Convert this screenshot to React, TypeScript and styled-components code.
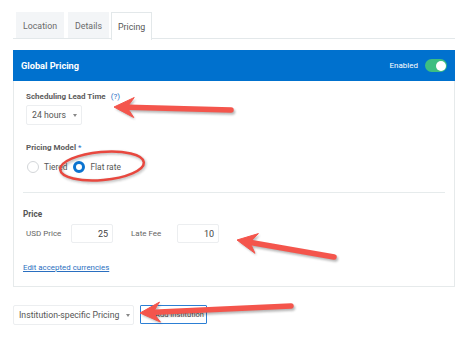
import React from "react";
import styled, { createGlobalStyle } from "styled-components";

const Global = createGlobalStyle`
  html, body { margin: 0; padding: 0; background: #fff; }
  body { font-family: Roboto, "Liberation Sans", Arial, sans-serif; color: #555; }
  * { box-sizing: border-box; }
`;

const Page = styled.div`
  position: relative;
  width: 468px;
  height: 345px;
  padding: 12px 13px 0 13px;
  overflow: hidden;
`;

const TabBar = styled.div`
  display: flex;
  gap: 4px;
  padding-left: 3px;
  border-bottom: 1px solid #e3e8ea;
  width: 442px;
  height: 27px;
`;

const Tab = styled.div<{ $active?: boolean }>`
  padding: 0 6px;
  display: flex;
  align-items: center;
  font-size: 8.8px;
  white-space: nowrap;
  color: ${(p) => (p.$active ? "#555" : "#6a6a6a")};
  background: ${(p) => (p.$active ? "#fff" : "#f3f5f7")};
  border: 1px solid ${(p) => (p.$active ? "#e3e8ea" : "transparent")};
  border-bottom: none;
  margin-bottom: ${(p) => (p.$active ? "-1px" : "0")};
  margin-left: ${(p) => (p.$active ? "-2px" : "0")};
  height: ${(p) => (p.$active ? "28px" : "26px")};
`;

const Card = styled.div`
  margin-top: 11px;
  width: 442px;
  border: 1px solid #e6eaeb;
  border-top: none;
`;

const Header = styled.div`
  height: 31px;
  background: #0071ce;
  display: flex;
  align-items: center;
  justify-content: space-between;
  padding: 0 8px 0 8px;
  margin: 0 -1px;
`;

const HeaderTitle = styled.div`
  color: #fff;
  font-size: 9.2px;
  font-weight: 700;
`;

const HeaderRight = styled.div`
  display: flex;
  align-items: center;
  gap: 7px;
  color: #fff;
  font-size: 8px;
`;

const Toggle = styled.div`
  width: 22px;
  height: 13px;
  border-radius: 7px;
  background: #3dbe80;
  display: flex;
  justify-content: flex-end;
  align-items: center;
  padding: 1.5px;
`;

const Knob = styled.div`
  width: 10px;
  height: 10px;
  border-radius: 50%;
  background: #fff;
`;

const Body = styled.div`
  padding: 9px 9px 13px 9px;
`;

const Section = styled.div`
  padding: 0 3px;
`;

const Label = styled.div<{ $mt?: number }>`
  font-size: 8px;
  font-weight: 700;
  color: #5c5c5c;
  display: flex;
  gap: 5px;
  align-items: center;
  height: 12px;
  white-space: nowrap;
  margin-top: ${(p) => p.$mt ?? 0}px;
`;

const Blue = styled.span`
  color: #1f6fc5;
  font-weight: 400;
`;

const Select = styled.div<{ $w: number; $mt?: number }>`
  margin-top: ${(p) => p.$mt ?? 0}px;
  width: ${(p) => p.$w}px;
  height: 20px;
  border: 1px solid #eceef0;
  border-radius: 2px;
  display: flex;
  align-items: center;
  padding: 0 5px;
  gap: 7px;
  font-size: 8.7px;
  color: #555;
  background: #fff;
  white-space: nowrap;
  flex-shrink: 0;
`;

const Caret = styled.span`
  width: 0;
  height: 0;
  border-left: 2.5px solid transparent;
  border-right: 2.5px solid transparent;
  border-top: 3px solid #888;
`;

const RadioRow = styled.div`
  display: flex;
  align-items: center;
  margin-top: 8px;
  height: 12px;
`;

const Radio = styled.div<{ $on?: boolean; $ml: number }>`
  width: 12px;
  height: 12px;
  border-radius: 50%;
  border: ${(p) => (p.$on ? "3.5px solid #0b73d0" : "1px solid #d3d6d9")};
  background: #fff;
  margin-left: ${(p) => p.$ml}px;
  flex-shrink: 0;
`;

const RadioText = styled.span`
  font-size: 8.4px;
  color: #555;
  margin-left: 5px;
  white-space: nowrap;
`;

const Divider = styled.div`
  height: 1px;
  background: #e6ebec;
  margin: 19px 0 15px 0;
`;

const PriceTitle = styled.div`
  font-size: 8.2px;
  font-weight: 700;
  color: #555;
  height: 12px;
  display: flex;
  align-items: center;
`;

const PriceRow = styled.div`
  display: flex;
  align-items: center;
  margin-top: 4px;
  padding-left: 3px;
`;

const FieldLabel = styled.span<{ $w: number }>`
  font-size: 8px;
  color: #666;
  width: ${(p) => p.$w}px;
  white-space: nowrap;
`;

const NumInput = styled.div<{ $mr?: number }>`
  width: 42px;
  height: 19px;
  border: 1px solid #eceef0;
  border-radius: 2px;
  font-size: 9px;
  color: #444;
  display: flex;
  align-items: center;
  justify-content: flex-end;
  padding-right: 4px;
  margin-right: ${(p) => p.$mr ?? 0}px;
`;

const Link = styled.a`
  display: block;
  margin-top: 19px;
  height: 11px;
  line-height: 11px;
  font-size: 7.9px;
  color: #2a6fc0;
  text-decoration: underline;
`;

const BottomRow = styled.div`
  display: flex;
  gap: 6px;
  margin-top: 18px;
`;

const OutlineBtn = styled.div`
  width: 67px;
  height: 19px;
  border: 1px solid #2c7fd4;
  border-radius: 1px;
  font-size: 7.5px;
  color: #444;
  display: flex;
  align-items: center;
  justify-content: center;
  padding-left: 12px;
  white-space: nowrap;
`;

const Overlay = styled.svg`
  position: absolute;
  left: 0;
  top: 0;
  pointer-events: none;
`;

const arrowColor = "#f4554c";

function Arrow({ tip, tail, w = 5.5, head = 10, headLen = 18 }: { tip: [number, number]; tail: [number, number]; w?: number; head?: number; headLen?: number }) {
  const [tx, ty] = tip;
  const [bx, by] = tail;
  const dx = bx - tx;
  const dy = by - ty;
  const len = Math.hypot(dx, dy);
  const ux = dx / len;
  const uy = dy / len;
  const nx = -uy;
  const ny = ux;
  const hx = tx + ux * headLen;
  const hy = ty + uy * headLen;
  const headPts = [
    [tx, ty],
    [hx + nx * head + ux * 2, hy + ny * head + uy * 2],
    [hx - ux * 3 + nx * (w / 2), hy - uy * 3 + ny * (w / 2)],
    [hx - ux * 3 - nx * (w / 2), hy - uy * 3 - ny * (w / 2)],
    [hx - nx * head + ux * 2, hy - ny * head + uy * 2],
  ]
    .map((p) => p.join(","))
    .join(" ");
  return (
    <g>
      <g transform="translate(1.5,2)" opacity="0.35" filter="url(#blur)">
        <line x1={hx - ux * 4} y1={hy - uy * 4} x2={bx} y2={by} stroke="#333" strokeWidth={w} strokeLinecap="round" />
        <polygon points={headPts} fill="#333" />
      </g>
      <line x1={hx - ux * 4} y1={hy - uy * 4} x2={bx} y2={by} stroke={arrowColor} strokeWidth={w} strokeLinecap="round" />
      <polygon points={headPts} fill={arrowColor} strokeLinejoin="round" stroke={arrowColor} strokeWidth={1} />
    </g>
  );
}

export default function App() {
  return (
    <>
      <Global />
      <Page>
        <TabBar>
          <Tab>Location</Tab>
          <Tab>Details</Tab>
          <Tab $active>Pricing</Tab>
        </TabBar>
        <Card>
          <Header>
            <HeaderTitle>Global Pricing</HeaderTitle>
            <HeaderRight>
              Enabled
              <Toggle>
                <Knob />
              </Toggle>
            </HeaderRight>
          </Header>
          <Body>
            <Section>
              <Label>
                Scheduling Lead Time <Blue>(?)</Blue>
              </Label>
              <Select $w={56} $mt={3}>
                24 hours <Caret />
              </Select>
              <Label $mt={16}>
                <span>
                  Pricing Model <Blue>*</Blue>
                </span>
              </Label>
              <RadioRow>
                <Radio $ml={1} />
                <RadioText>Tiered</RadioText>
                <Radio $on $ml={6} />
                <RadioText>Flat rate</RadioText>
              </RadioRow>
            </Section>
            <Divider />
            <PriceTitle>Price</PriceTitle>
            <PriceRow>
              <FieldLabel $w={45}>USD Price</FieldLabel>
              <NumInput $mr={18}>25</NumInput>
              <FieldLabel $w={46}>Late Fee</FieldLabel>
              <NumInput>10</NumInput>
            </PriceRow>
            <Link>Edit accepted currencies</Link>
          </Body>
        </Card>
        <BottomRow>
          <Select $w={121}>
            Institution-specific Pricing <Caret />
          </Select>
          <OutlineBtn>Add Institution</OutlineBtn>
        </BottomRow>
        <Overlay width="468" height="345" viewBox="0 0 468 345">
          <defs>
            <filter id="blur" x="-10%" y="-50%" width="120%" height="200%">
              <feGaussianBlur stdDeviation="1" />
            </filter>
          </defs>
          <g transform="rotate(-5 102 166)">
            <ellipse cx="102" cy="166" rx="42" ry="14" fill="none" stroke="#333" strokeOpacity="0.3" strokeWidth="3" transform="translate(1,1.5)" filter="url(#blur)" />
            <ellipse cx="102" cy="166" rx="42" ry="14" fill="none" stroke="#e8483f" strokeWidth="2.5" />
          </g>
          <Arrow tip={[114, 107]} tail={[231, 110]} />
          <Arrow tip={[237, 240]} tail={[334, 257]} />
          <Arrow tip={[140, 313]} tail={[291, 306]} />
        </Overlay>
      </Page>
    </>
  );
}
